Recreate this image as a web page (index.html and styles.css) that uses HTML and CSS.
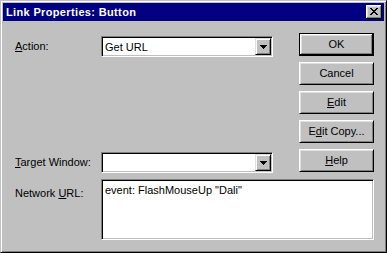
FILE: index.html
```html
<!DOCTYPE html>
<html>
<head>
<meta charset="utf-8">
<link rel="stylesheet" href="styles.css">
</head>
<body>
<div class="window">
  <div class="titlebar">
    <span class="title">Link Properties: Button</span>
    <div class="close">
      <svg class="xglyph" width="8" height="7" viewBox="0 0 8 7" shape-rendering="crispEdges">
        <path d="M0 0h2v1H0zM6 0h2v1H6zM1 1h2v1H1zM5 1h2v1H5zM2 2h4v1H2zM3 3h2v1H3zM2 4h4v1H2zM1 5h2v1H1zM5 5h2v1H5zM0 6h2v1H0zM6 6h2v1H6z" fill="#000"/>
      </svg>
    </div>
  </div>
  <div class="content">
    <div class="top">
      <div class="fields">
        <div class="row">
          <span class="label"><u>A</u>ction:</span>
          <div class="combo">
            <span class="combo-text">Get URL</span>
            <div class="ddbtn">
              <svg width="7" height="4" viewBox="0 0 7 4" shape-rendering="crispEdges"><path d="M0 0h7v1H0zM1 1h5v1H1zM2 2h3v1H2zM3 3h1v1H3z" fill="#000"/></svg>
            </div>
          </div>
        </div>
        <div class="row">
          <span class="label"><u>T</u>arget Window:</span>
          <div class="combo">
            <span class="combo-text"></span>
            <div class="ddbtn">
              <svg width="7" height="4" viewBox="0 0 7 4" shape-rendering="crispEdges"><path d="M0 0h7v1H0zM1 1h5v1H1zM2 2h3v1H2zM3 3h1v1H3z" fill="#000"/></svg>
            </div>
          </div>
        </div>
      </div>
      <div class="buttons">
        <div class="btn default">OK</div>
        <div class="btn">Cancel</div>
        <div class="btn"><span><u>E</u>dit</span></div>
        <div class="btn"><span>E<u>d</u>it Copy...</span></div>
        <div class="btn"><span><u>H</u>elp</span></div>
      </div>
    </div>
    <div class="netrow">
      <span class="label net-label">Network <u>U</u>RL:</span>
      <div class="textbox">event: FlashMouseUp "Dali"</div>
    </div>
  </div>
</div>
</body>
</html>
```
FILE: styles.css
```css
* { box-sizing: border-box; }
html, body { margin: 0; padding: 0; }
body {
  background: #c0c0c0;
  font-family: "Liberation Sans", Arial, sans-serif;
  font-size: 11px;
  line-height: 13px;
  color: #000;
}
.window {
  width: 387px;
  height: 253px;
  border: 1px solid;
  border-color: #c0c0c0 #000 #000 #c0c0c0;
  box-shadow: inset 1px 1px #fff, inset -1px -1px #808080;
  padding: 2px;
  background: #c0c0c0;
  display: flex;
  flex-direction: column;
}
.titlebar {
  height: 18px;
  flex: none;
  background: #000080;
  color: #fff;
  display: flex;
  align-items: center;
  justify-content: space-between;
  padding: 0 2px 0 3px;
}
.title {
  font-weight: bold;
  font-size: 11px;
  letter-spacing: 0.35px;
}
.close {
  width: 16px;
  height: 14px;
  background: #c0c0c0;
  box-shadow: inset -1px -1px #000, inset 1px 1px #fff, inset -2px -2px #808080, inset 2px 2px #dfdfdf;
  padding: 3px 0 0 4px;
}
.xglyph { display: block; }
.content {
  flex: 1;
  padding: 12px 10px 0 12px;
}
.top {
  display: flex;
  justify-content: space-between;
}
.fields {
  display: flex;
  flex-direction: column;
  gap: 95px;
  padding-top: 3px;
}
.row {
  display: flex;
  align-items: center;
  height: 21px;
}
.label {
  width: 86px;
  flex: none;
  white-space: nowrap;
}
.combo {
  width: 172px;
  height: 21px;
  background: #fff;
  border: 1px solid;
  border-color: #808080 #fff #fff #808080;
  box-shadow: inset 1px 1px #000, inset -1px -1px #c0c0c0;
  padding: 1px;
  display: flex;
  align-items: center;
}
.combo-text {
  flex: 1;
  padding-left: 2px;
  padding-top: 1px;
}
.ddbtn {
  width: 16px;
  height: 17px;
  flex: none;
  background: #c0c0c0;
  border: 1px solid;
  border-color: #dfdfdf #000 #000 #dfdfdf;
  box-shadow: inset 1px 1px #fff, inset -1px -1px #808080;
  display: flex;
  align-items: center;
  justify-content: center;
}
.ddbtn svg { display: block; }
.buttons {
  display: flex;
  flex-direction: column;
  gap: 6px;
}
.btn {
  width: 75px;
  height: 23px;
  background: #c0c0c0;
  border: 1px solid;
  border-color: #fff #000 #000 #fff;
  box-shadow: inset 1px 1px #dfdfdf, inset -1px -1px #808080;
  display: flex;
  align-items: center;
  justify-content: center;
}
.btn.default {
  border-color: #000;
  box-shadow: inset -1px -1px #000, inset 1px 1px #fff, inset -2px -2px #808080, inset 2px 2px #dfdfdf;
}
.netrow {
  display: flex;
  margin-top: 6px;
}
.net-label {
  padding-top: 8px;
}
.textbox {
  flex: 1;
  height: 61px;
  background: #fff;
  border: 1px solid;
  border-color: #808080 #fff #fff #808080;
  box-shadow: inset 1px 1px #000, inset -1px -1px #c0c0c0;
  padding: 4px 3px;
}
```
